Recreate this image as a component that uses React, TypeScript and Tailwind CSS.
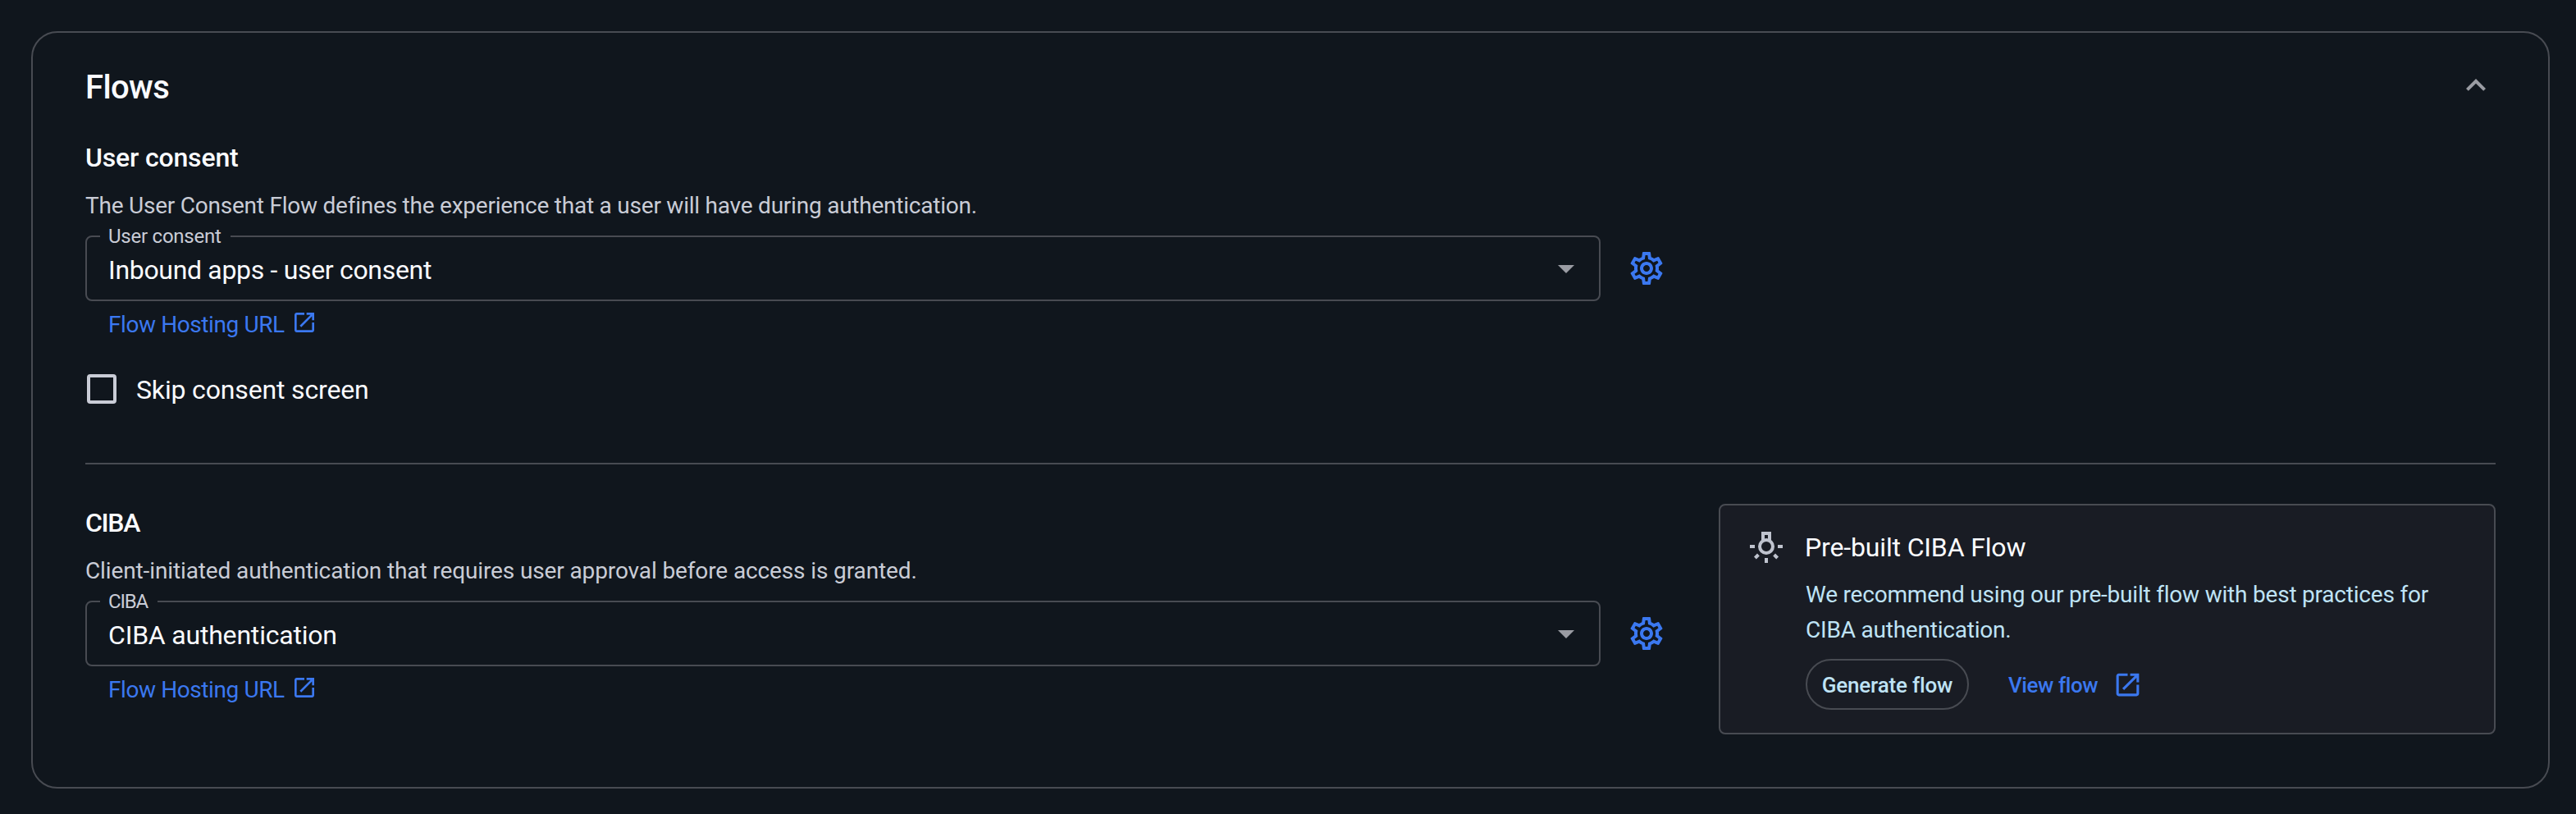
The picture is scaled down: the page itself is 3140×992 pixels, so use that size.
import type { ReactNode } from "react";

function OpenInNew({ className }: { className: string }) {
  return (
    <svg viewBox="0 0 24 24" fill="currentColor" className={className} aria-hidden="true">
      <path d="M19 19H5V5h7V3H5c-1.11 0-2 .9-2 2v14c0 1.1.89 2 2 2h14c1.1 0 2-.9 2-2v-7h-2zM14 3v2h3.59l-9.83 9.83 1.41 1.41L19 6.41V10h2V3z" />
    </svg>
  );
}

function Gear() {
  return (
    <svg viewBox="0 0 24 24" fill="currentColor" className="size-12 text-[#3b78f0]" aria-hidden="true">
      <path d="M19.43 12.98c.04-.32.07-.64.07-.98s-.03-.66-.07-.98l2.11-1.65c.19-.15.24-.42.12-.64l-2-3.46c-.09-.16-.26-.25-.44-.25-.06 0-.12.01-.17.03l-2.49 1c-.52-.4-1.08-.73-1.69-.98l-.38-2.65C14.46 2.18 14.25 2 14 2h-4c-.25 0-.46.18-.49.42l-.38 2.65c-.61.25-1.17.59-1.69.98l-2.49-1c-.06-.02-.12-.03-.18-.03-.17 0-.34.09-.43.25l-2 3.46c-.13.22-.07.49.12.64l2.11 1.65c-.04.32-.07.65-.07.98s.03.66.07.98l-2.11 1.65c-.19.15-.24.42-.12.64l2 3.46c.09.16.26.25.44.25.06 0 .12-.01.17-.03l2.49-1c.52.4 1.08.73 1.69.98l.38 2.65c.03.24.24.42.49.42h4c.25 0 .46-.18.49-.42l.38-2.65c.61-.25 1.17-.59 1.69-.98l2.49 1c.06.02.12.03.18.03.17 0 .34-.09.43-.25l2-3.46c.12-.22.07-.49-.12-.64zm-1.98-1.71c.04.31.05.52.05.73s-.02.43-.05.73l-.14 1.13.89.7 1.08.84-.7 1.21-1.27-.51-1.04-.42-.9.68c-.43.32-.84.56-1.25.73l-1.06.43-.16 1.13-.2 1.35h-1.4l-.19-1.35-.16-1.13-1.06-.43c-.43-.18-.83-.41-1.23-.71l-.91-.7-1.06.43-1.27.51-.7-1.21 1.08-.84.89-.7-.14-1.13c-.03-.31-.05-.54-.05-.74s.02-.43.05-.73l.14-1.13-.89-.7-1.08-.84.7-1.21 1.27.51 1.04.42.9-.68c.43-.32.84-.56 1.25-.73l1.06-.43.16-1.13.2-1.35h1.39l.19 1.35.16 1.13 1.06.43c.43.18.83.41 1.23.71l.91.7 1.06-.43 1.27-.51.7 1.21-1.07.85-.89.7zM12 8c-2.21 0-4 1.79-4 4s1.79 4 4 4 4-1.79 4-4-1.79-4-4-4m0 6c-1.1 0-2-.9-2-2s.9-2 2-2 2 .9 2 2-.9 2-2 2" />
    </svg>
  );
}

function Bulb() {
  return (
    <svg viewBox="0 0 48 48" fill="none" stroke="currentColor" strokeWidth="4" className="size-12 text-[#bfc3ce]" aria-hidden="true">
      <circle cx="24" cy="24" r="8" />
      <path d="M20 17.5V8h8v9.5M4 24h6M38 24h6M24 38v6M14.4 34l-4 4M33.6 34l4 4" />
    </svg>
  );
}

function Heading({ className, children }: { className: string; children: ReactNode }) {
  return <h3 className={`text-[32px] leading-10 font-medium text-[#fafbff] ${className}`}>{children}</h3>;
}

function Select({ label, labelClass, value, valueClass }: { label: string; labelClass: string; value: string; valueClass: string }) {
  return (
    <div className="mt-4 flex items-center gap-8">
      <div className="relative flex h-20 w-[1847px] items-center justify-between rounded-lg border-2 border-[#484b52] pr-4 pl-[26px]">
        <span className={`absolute -top-[15px] left-4 h-7 bg-[#10161d] pl-[10px] text-2xl leading-7 whitespace-nowrap text-[#c9ccd6] ${labelClass}`}>{label}</span>
        <span className={`pt-1 text-[32px] leading-10 text-[#fafbff] ${valueClass}`}>{value}</span>
        <svg viewBox="0 0 24 24" fill="currentColor" className="size-12 text-[#9a9ca3]" aria-hidden="true">
          <path d="m7 10 5 5 5-5z" />
        </svg>
      </div>
      <Gear />
    </div>
  );
}

function HostingLink() {
  return (
    <a className="mt-[9px] flex h-10 items-center pl-7 text-[#3b78f0]">
      <span className="w-[223px] text-[28px] leading-10 tracking-[-0.41px] whitespace-nowrap">Flow Hosting URL</span>
      <OpenInNew className="mb-[6px] size-8" />
    </a>
  );
}

export default function App() {
  return (
    <div className="h-[992px] w-[3140px] bg-[#10161d] pt-[38px] pl-[38px] font-['Roboto',sans-serif]">
      <section className="h-[923px] w-[3070px] rounded-[32px] border-2 border-[#484b52] px-16 pt-[43px]">
        <header className="flex h-12 items-center justify-between">
          <h2 className="text-[40px] leading-[48px] font-medium tracking-[-0.6px] text-[#fafbff]">Flows</h2>
          <svg viewBox="0 0 24 24" fill="currentColor" className="mb-[6px] size-12 text-[#9a9ca3]" aria-hidden="true">
            <path d="m12 8-6 6 1.41 1.41L12 10.83l4.59 4.58L18 14z" />
          </svg>
        </header>

        <div className="mt-[41px]">
          <Heading className="tracking-[-0.17px]">User consent</Heading>
          <p className="mt-[19px] text-[28px] leading-10 tracking-[-0.23px] text-[#c9ccd6]">
            The User Consent Flow defines the experience that a user will have during authentication.
          </p>
          <Select label="User consent" labelClass="w-[159px] tracking-[-0.24px]" value="Inbound apps - user consent" valueClass="tracking-[-0.32px]" />
          <HostingLink />
          <label className="mt-[39px] flex h-10 items-center gap-6 pl-[2px]">
            <span className="mb-[2px] size-9 rounded-[4px] border-4 border-[#c9ccd6]" />
            <span className="text-[32px] leading-10 tracking-[-0.16px] text-[#fafbff]">Skip consent screen</span>
          </label>
        </div>

        <hr className="mt-[69px] border-t-2 border-[#484b52]" />

        <div className="mt-12 flex justify-between">
          <div className="pt-[3px]">
            <Heading className="tracking-[-1.3px]">CIBA</Heading>
            <p className="mt-[19px] text-[28px] leading-10 tracking-[-0.12px] text-[#c9ccd6]">
              Client-initiated authentication that requires user approval before access is granted.
            </p>
            <Select label="CIBA" labelClass="w-[70px] tracking-[-1.2px]" value="CIBA authentication" valueClass="tracking-[-0.2px]" />
            <HostingLink />
          </div>

          <aside className="flex h-[281px] w-[947px] gap-6 rounded-lg border-2 border-[#484b52] bg-[#191c24] pt-[31px] pl-8">
            <div className="-mt-[5px]">
              <Bulb />
            </div>
            <div>
              <h4 className="-ml-px text-[32px] leading-10 tracking-[-0.15px] text-[#fafbff]">Pre-built CIBA Flow</h4>
              <p className="mt-4 w-[780px] text-[28px] leading-[43px] tracking-[-0.21px] text-[#bfe3f5]">
                We recommend using our pre-built flow with best practices for CIBA authentication.
              </p>
              <div className="mt-[14px] flex items-center text-[26px] font-medium">
                <button className="h-[62px] w-[199px] rounded-full border-2 border-[#484b52] pt-[2px] tracking-[-0.17px] whitespace-nowrap text-[#bfe3f5]">Generate flow</button>
                <a className="ml-12 flex items-center text-[#3b78f0]">
                  <span className="w-[127px] pt-[2px] tracking-[-0.41px] whitespace-nowrap">View flow</span>
                  <OpenInNew className="size-[37px]" />
                </a>
              </div>
            </div>
          </aside>
        </div>
      </section>
    </div>
  );
}
